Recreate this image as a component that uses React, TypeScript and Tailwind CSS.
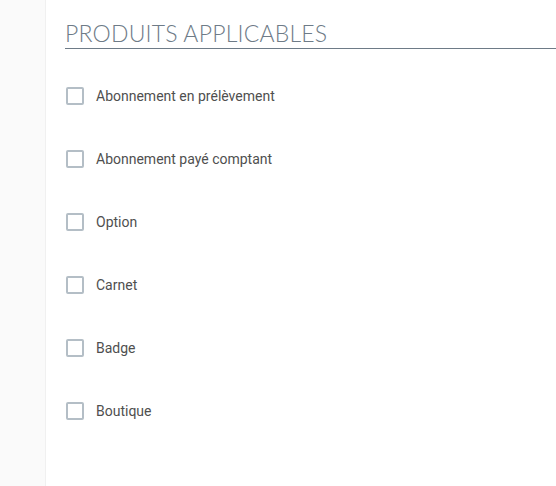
import React from "react";

const items = [
  "Abonnement en prélèvement",
  "Abonnement payé comptant",
  "Option",
  "Carnet",
  "Badge",
  "Boutique",
];

export default function App() {
  return (
    <div className="flex h-[486px] w-[556px] overflow-hidden bg-white">
      <div className="w-[46px] shrink-0 border-r border-[#f0f0f0] bg-[#fafafa]" />
      <div className="flex-1 pl-[19px] pt-[19px]">
        <h2
          className="border-b-[1.5px] border-[#6e7b87] pb-[1px] text-[23px] font-light leading-[28px] text-[#6e7b87] tracking-[0.2px]"
          style={{ fontFamily: "Lato, 'Open Sans', sans-serif" }}
        >
          PRODUITS APPLICABLES
        </h2>
        <ul className="mt-[38px] flex flex-col gap-[45px]" style={{ fontFamily: "Roboto, 'Liberation Sans', sans-serif" }}>
          {items.map((t) => (
            <li key={t} className="flex h-[18px] items-center">
              <span className="ml-[1px] h-[18px] w-[18px] rounded-[2px] border-2 border-[#b4bec6] bg-white" />
              <span className="ml-[12px] text-[14px] text-[#4f4f4f]">{t}</span>
            </li>
          ))}
        </ul>
      </div>
    </div>
  );
}
